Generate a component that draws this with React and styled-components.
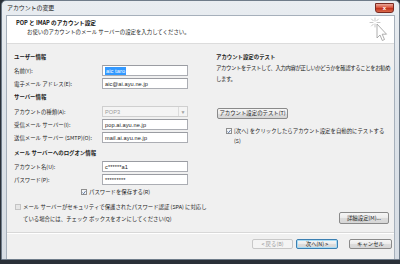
import React from "react";
import styled, { createGlobalStyle } from "styled-components";

const GlobalStyle = createGlobalStyle`
  html, body {
    margin: 0;
    padding: 0;
    background: #2a3038;
  }
  body {
    padding-left: 1px;
    font-family: "Noto Sans CJK JP", "Noto Sans", sans-serif;
    color: #1e1e1e;
  }
`;

const Window = styled.div`
  width: 397px;
  height: 258px;
  border: 1px solid #6f7c8a;
  border-radius: 5px 5px 0 0;
  background: linear-gradient(180deg, #e9edf1 0%, #dde3e9 40%, #d7dde4 100%);
  display: flex;
  flex-direction: column;
`;

const TitleBar = styled.div`
  height: 14px;
  display: flex;
  align-items: center;
  justify-content: space-between;
  padding: 0 5px 0 5px;
`;

const Title = styled.span`
  font-size: 6px;
  line-height: 8px;
  color: #222;
  letter-spacing: -0.1px;
`;

const CloseButton = styled.div`
  width: 19px;
  height: 10px;
  margin-top: -1px;
  border: 1px solid #7a2a22;
  border-radius: 0 0 3px 3px;
  background: linear-gradient(180deg, #e9a89a 0%, #d9553e 45%, #c2321c 55%, #d96a4c 100%);
  display: flex;
  align-items: center;
  justify-content: center;
  box-sizing: border-box;
  color: #fff;
  font-family: "Liberation Sans", sans-serif;
  font-size: 6px;
  font-weight: bold;
  line-height: 6px;
`;

const Client = styled.div`
  margin: 0 4px 0 4px;
  flex: 1;
  border: 1px solid #a6b0bb;
  border-bottom: none;
  display: flex;
  flex-direction: column;
  background: #f0f0f0;
  overflow: hidden;
`;

const Header = styled.div`
  height: 27px;
  background: #ffffff;
  border-bottom: 1px solid #dcdcdc;
  display: flex;
  justify-content: space-between;
  align-items: flex-start;
  padding-left: 9px;
`;

const HeaderText = styled.div`
  display: flex;
  flex-direction: column;
  padding-top: 3px;
`;

const HeaderTitle = styled.div`
  font-size: 5.6px;
  line-height: 9px;
  font-weight: bold;
  color: #111;
`;

const HeaderSub = styled.div`
  font-size: 5.4px;
  line-height: 9px;
  padding-left: 11px;
  color: #222;
`;

const WizardIcon = styled.svg`
  margin: 1px 4px 0 0;
`;

const Body = styled.div`
  flex: 1;
  display: flex;
  padding-left: 7px;
`;

const LeftColumn = styled.div`
  flex: none;
  width: 202px;
  display: flex;
  flex-direction: column;
  padding-top: 8px;
`;

const RightColumn = styled.div`
  flex: 1;
  min-width: 0;
  display: flex;
  flex-direction: column;
  padding: 8px 5px 8px 0;
`;

const Heading = styled.div`
  height: 10px;
  line-height: 10px;
  font-size: 5.4px;
  font-weight: bold;
  color: #1a1a1a;
  margin-top: ${(p) => p.$top || 0}px;
  margin-bottom: ${(p) => p.$bottom || 2}px;
`;

const Row = styled.div`
  height: 13px;
  display: flex;
  align-items: center;
`;

const Label = styled.span`
  width: 88px;
  font-size: 5.4px;
  color: #1e1e1e;
`;

const Input = styled.div`
  width: 86px;
  height: 11px;
  box-sizing: border-box;
  border: 1px solid ${(p) => (p.$disabled ? "#cfcfcf" : "#abadb3")};
  border-top-color: ${(p) => (p.$disabled ? "#cfcfcf" : "#9a9ca2")};
  background: ${(p) => (p.$disabled ? "#f4f4f4" : "#fff")};
  display: flex;
  align-items: center;
  justify-content: space-between;
  padding-left: 2px;
  font-family: "Liberation Sans", sans-serif;
  font-size: 5.6px;
  color: ${(p) => (p.$disabled ? "#9a9a9a" : "#1a1a1a")};
  letter-spacing: 0.1px;
`;

const Selected = styled.span`
  background: #3399ff;
  color: #fff;
  padding: 0 1px;
  line-height: 8px;
`;

const SelectArrow = styled.span`
  width: 8px;
  height: 9px;
  border-left: 1px solid #dcdcdc;
  display: flex;
  align-items: center;
  justify-content: center;
  color: #a0a0a0;
  font-size: 5px;
`;

const CheckRow = styled.div`
  display: flex;
  align-items: flex-start;
  padding-left: ${(p) => p.$indent || 0}px;
  margin-top: ${(p) => p.$top || 0}px;
  font-size: 5.4px;
  line-height: ${(p) => p.$lh || 10}px;
  white-space: nowrap;
  color: #1e1e1e;
`;

const Box = styled.span`
  flex: none;
  width: 6px;
  height: 6px;
  margin-top: ${(p) => p.$offset || 2}px;
  margin-right: 2px;
  box-sizing: border-box;
  border: 1px solid ${(p) => (p.$disabled ? "#c4c4c4" : "#8f8f8f")};
  background: ${(p) => (p.$disabled ? "#e6e6e6" : "#f4f6f8")};
  display: flex;
  align-items: center;
  justify-content: center;
`;

const Description = styled.div`
  font-size: 5.4px;
  line-height: 11px;
  letter-spacing: -0.4px;
  white-space: nowrap;
  color: #222;
  margin-top: -1px;
`;

const Button = styled.button`
  height: ${(p) => p.$h || 11}px;
  width: ${(p) => p.$w}px;
  margin: 0;
  padding: 0;
  box-sizing: border-box;
  border: 1px solid ${(p) => (p.$primary ? "#3c7fb1" : p.$disabled ? "#c8c8c8" : "#8a8a8a")};
  border-radius: 2px;
  background: ${(p) =>
    p.$disabled
      ? "#f4f4f4"
      : "linear-gradient(180deg, #f6f6f6 0%, #ebebeb 50%, #dcdcdc 51%, #d6d6d6 100%)"};
  box-shadow: ${(p) => (p.$primary ? "inset 0 0 0 1px #a8dcf5" : "none")};
  font-family: "Noto Sans CJK JP", sans-serif;
  font-size: 5.4px;
  line-height: 8px;
  color: ${(p) => (p.$disabled ? "#9a9a9a" : "#1e1e1e")};
`;

const TestButtonWrap = styled.div`
  margin: 11px 0 0 1px;
`;

const DetailWrap = styled.div`
  margin-top: auto;
  display: flex;
  justify-content: flex-end;
`;

const Footer = styled.div`
  height: 20px;
  border-top: 1px solid #d8d8d8;
  box-shadow: inset 0 1px 0 #ffffff;
  display: flex;
  justify-content: flex-end;
  align-items: flex-start;
  padding: 6px 2px 0 0;
  gap: 3px;
`;

const Spacer = styled.span`
  width: 5px;
`;

const Check = () => (
  <svg width="5" height="5" viewBox="0 0 5 5">
    <path d="M0.6 2.6 L2 4 L4.4 0.8" fill="none" stroke="#2c4f8a" strokeWidth="0.9" />
  </svg>
);

const TextField = ({ label, value, children, disabled }) => (
  <Row>
    <Label>{label}</Label>
    <Input $disabled={disabled}>{children || value}</Input>
  </Row>
);

export default function App() {
  return (
    <>
      <GlobalStyle />
      <Window>
        <TitleBar>
          <Title>アカウントの変更</Title>
          <CloseButton>x</CloseButton>
        </TitleBar>
        <Client>
          <Header>
            <HeaderText>
              <HeaderTitle>POP と IMAP のアカウント設定</HeaderTitle>
              <HeaderSub>お使いのアカウントのメール サーバーの設定を入力してください。</HeaderSub>
            </HeaderText>
            <WizardIcon width="22" height="26" viewBox="0 0 22 26">
              <g stroke="#b9b9b9" strokeWidth="0.8" strokeLinecap="round">
                <path d="M7 1 L7 4" />
                <path d="M7 7 L7 10" />
                <path d="M2 5.5 L5 5.5" />
                <path d="M9 5.5 L12 5.5" />
                <path d="M3.5 2 L5.3 3.8" />
                <path d="M10.5 2 L8.7 3.8" />
                <path d="M3.5 9 L5.3 7.2" />
              </g>
              <path
                d="M9 7 L9 21 L12 18 L14.3 23.5 L16.5 22.5 L14.2 17.2 L18.5 17.2 Z"
                fill="#ffffff"
                stroke="#9b9b9b"
                strokeWidth="0.8"
                strokeLinejoin="round"
              />
            </WizardIcon>
          </Header>
          <Body>
            <LeftColumn>
              <Heading>ユーザー情報</Heading>
              <TextField label="名前(Y):">
                <Selected>aic taro</Selected>
              </TextField>
              <TextField label="電子メール アドレス(E):" value="aic@ai.ayu.ne.jp" />
              <Heading $top={2} $bottom={3}>サーバー情報</Heading>
              <Row>
                <Label>アカウントの種類(A):</Label>
                <Input $disabled>
                  POP3
                  <SelectArrow>▼</SelectArrow>
                </Input>
              </Row>
              <TextField label="受信メール サーバー(I):" value="pop.ai.ayu.ne.jp" />
              <TextField label="送信メール サーバー (SMTP)(O):" value="mail.ai.ayu.ne.jp" />
              <Heading $top={4} $bottom={2}>メール サーバーへのログオン情報</Heading>
              <TextField label="アカウント名(U):" value="c******a1" />
              <TextField label="パスワード(P):" value="*********" />
              <CheckRow $indent={67} $top={1}>
                <Box>
                  <Check />
                </Box>
                パスワードを保存する(R)
              </CheckRow>
              <CheckRow $indent={1} $top={4} $lh={12}>
                <Box $disabled $offset={3} />
                <span>
                  メール サーバーがセキュリティで保護されたパスワード認証 (SPA) に対応し
                  <br />
                  ている場合には、チェック ボックスをオンにしてください(Q)
                </span>
              </CheckRow>
            </LeftColumn>
            <RightColumn>
              <Heading $bottom={0}>アカウント設定のテスト</Heading>
              <Description>
                アカウントをテストして、入力内容が正しいかどうかを確認することをお勧め
                <br />
                します。
              </Description>
              <TestButtonWrap>
                <Button $w={71}>アカウント設定のテスト(T)</Button>
              </TestButtonWrap>
              <CheckRow $indent={10} $top={6}>
                <Box>
                  <Check />
                </Box>
                <span>
                  [次へ] をクリックしたらアカウント設定を自動的にテストする
                  <br />
                  (S)
                </span>
              </CheckRow>
              <DetailWrap>
                <Button $w={50} $h={12}>詳細設定(M)...</Button>
              </DetailWrap>
            </RightColumn>
          </Body>
          <Footer>
            <Button $w={41} $h={10} $disabled>&lt; 戻る(B)</Button>
            <Button $w={42} $h={10} $primary>次へ(N) &gt;</Button>
            <Spacer />
            <Button $w={43} $h={10}>キャンセル</Button>
          </Footer>
        </Client>
      </Window>
    </>
  );
}
